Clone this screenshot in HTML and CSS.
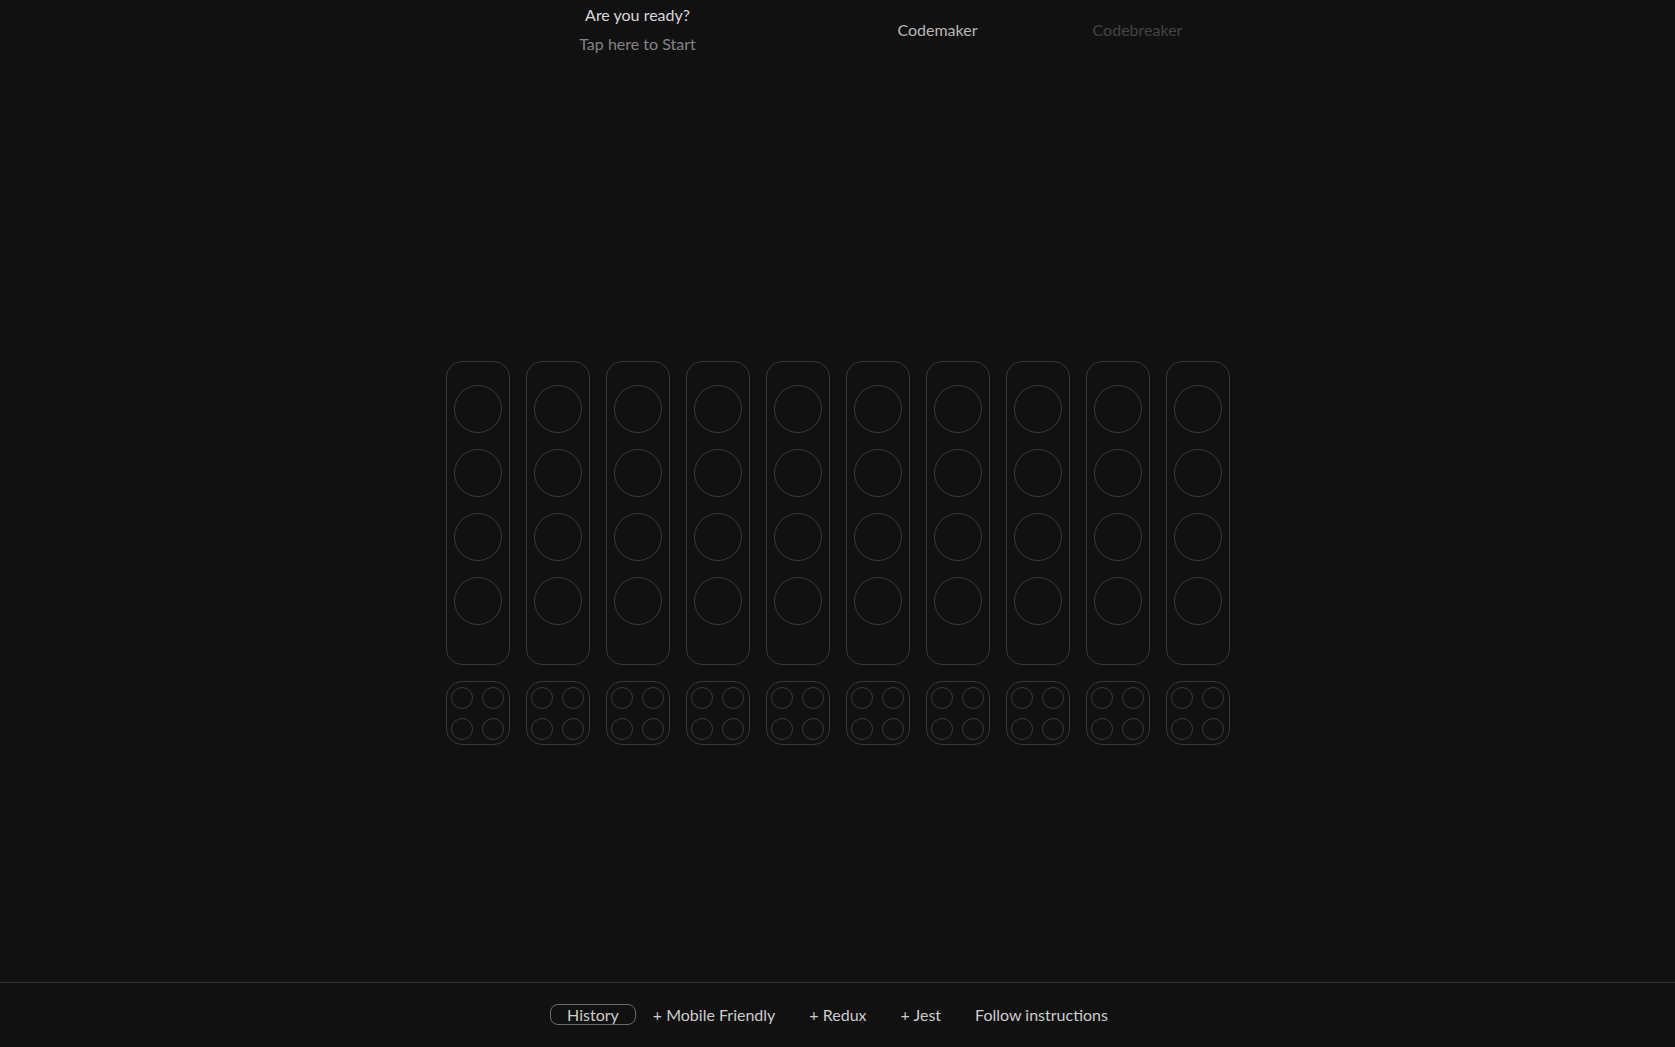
FILE: index.html
```html
<!DOCTYPE html>
<html lang="en">
<head>
<meta charset="utf-8">
<title>Mastermind</title>
<link rel="stylesheet" href="styles.css">
</head>
<body>
<div class="app">
  <header class="header">
    <div class="status">
      <div class="status-title">Are you ready?</div>
      <div class="status-sub">Tap here to Start</div>
    </div>
    <div class="roles">
      <div class="role role-active">Codemaker</div>
      <div class="role role-inactive">Codebreaker</div>
    </div>
  </header>
  <main class="main">
    <div class="board">
      <div class="turn"><div class="guess"><span class="peg"></span><span class="peg"></span><span class="peg"></span><span class="peg"></span></div><div class="hints"><span class="hint"></span><span class="hint"></span><span class="hint"></span><span class="hint"></span></div></div>
      <div class="turn"><div class="guess"><span class="peg"></span><span class="peg"></span><span class="peg"></span><span class="peg"></span></div><div class="hints"><span class="hint"></span><span class="hint"></span><span class="hint"></span><span class="hint"></span></div></div>
      <div class="turn"><div class="guess"><span class="peg"></span><span class="peg"></span><span class="peg"></span><span class="peg"></span></div><div class="hints"><span class="hint"></span><span class="hint"></span><span class="hint"></span><span class="hint"></span></div></div>
      <div class="turn"><div class="guess"><span class="peg"></span><span class="peg"></span><span class="peg"></span><span class="peg"></span></div><div class="hints"><span class="hint"></span><span class="hint"></span><span class="hint"></span><span class="hint"></span></div></div>
      <div class="turn"><div class="guess"><span class="peg"></span><span class="peg"></span><span class="peg"></span><span class="peg"></span></div><div class="hints"><span class="hint"></span><span class="hint"></span><span class="hint"></span><span class="hint"></span></div></div>
      <div class="turn"><div class="guess"><span class="peg"></span><span class="peg"></span><span class="peg"></span><span class="peg"></span></div><div class="hints"><span class="hint"></span><span class="hint"></span><span class="hint"></span><span class="hint"></span></div></div>
      <div class="turn"><div class="guess"><span class="peg"></span><span class="peg"></span><span class="peg"></span><span class="peg"></span></div><div class="hints"><span class="hint"></span><span class="hint"></span><span class="hint"></span><span class="hint"></span></div></div>
      <div class="turn"><div class="guess"><span class="peg"></span><span class="peg"></span><span class="peg"></span><span class="peg"></span></div><div class="hints"><span class="hint"></span><span class="hint"></span><span class="hint"></span><span class="hint"></span></div></div>
      <div class="turn"><div class="guess"><span class="peg"></span><span class="peg"></span><span class="peg"></span><span class="peg"></span></div><div class="hints"><span class="hint"></span><span class="hint"></span><span class="hint"></span><span class="hint"></span></div></div>
      <div class="turn"><div class="guess"><span class="peg"></span><span class="peg"></span><span class="peg"></span><span class="peg"></span></div><div class="hints"><span class="hint"></span><span class="hint"></span><span class="hint"></span><span class="hint"></span></div></div>
    </div>
  </main>
  <footer class="footer">
    <span class="link link-active">History</span>
    <span class="link">+ Mobile Friendly</span>
    <span class="link">+ Redux</span>
    <span class="link">+ Jest</span>
    <span class="link">Follow instructions</span>
  </footer>
</div>
</body>
</html>
```

FILE: styles.css
```css
html, body {
  margin: 0;
  padding: 0;
  background: #111111;
}

body {
  font-family: Lato, "Liberation Sans", sans-serif;
  font-size: 16px;
  color: #cccccc;
}

.app {
  height: 100vh;
  display: flex;
  flex-direction: column;
}

.header {
  width: 800px;
  margin: 0 auto;
  display: flex;
}

.status {
  width: 400px;
  text-align: center;
  line-height: 29px;
}

.status-title {
  color: #d8d8d8;
}

.status-sub {
  color: #838383;
}

.roles {
  width: 400px;
  display: flex;
  align-items: center;
}

.role {
  width: 200px;
  text-align: center;
}

.role-active {
  color: #b8b8b8;
}

.role-inactive {
  color: #444444;
}

.main {
  flex: 1;
  padding-top: 303px;
}

.board {
  display: flex;
  justify-content: center;
  gap: 16px;
}

.turn {
  display: flex;
  flex-direction: column;
  gap: 16px;
}

.guess {
  box-sizing: border-box;
  width: 64px;
  height: 304px;
  border: 1px solid #383838;
  border-radius: 16px;
  padding: 23px 7px;
  display: flex;
  flex-direction: column;
  gap: 16px;
}

.peg {
  box-sizing: border-box;
  width: 48px;
  height: 48px;
  border: 1px solid #3a3a3a;
  border-radius: 50%;
}

.hints {
  box-sizing: border-box;
  width: 64px;
  height: 64px;
  border: 1px solid #383838;
  border-radius: 16px;
  display: grid;
  grid-template-columns: 22px 22px;
  grid-template-rows: 22px 22px;
  gap: 9px;
  justify-content: center;
  align-content: center;
}

.hint {
  box-sizing: border-box;
  border: 1px solid #3a3a3a;
  border-radius: 50%;
}

.footer {
  box-sizing: border-box;
  height: 65px;
  border-top: 1px solid #333333;
  padding-bottom: 2px;
  display: flex;
  justify-content: center;
  align-items: center;
}

.link {
  padding: 0 16px;
  line-height: 19px;
  color: #cccccc;
  border: 1px solid transparent;
  border-radius: 8px;
}

.link-active {
  border-color: #6a6a6a;
}
```
